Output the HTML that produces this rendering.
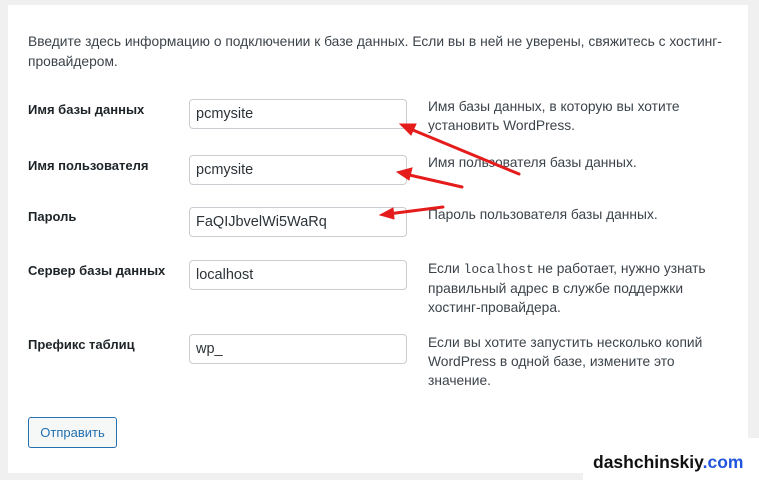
<!DOCTYPE html>
<html><head><meta charset="utf-8"><style>
html,body{margin:0;width:759px;height:480px;overflow:hidden}
body{background:#f0f0f1;font-family:"Liberation Sans",sans-serif;color:#3c434a;font-size:13.8px;position:relative}
.panel{position:absolute;left:8px;top:5px;width:740px;height:468px;background:#fff}
.t{position:absolute;line-height:20px;white-space:nowrap}
.lbl{position:absolute;left:28px;font-weight:bold;color:#1d2327;font-size:13px}
.in{position:absolute;left:189px;width:218px;height:30px;border:1px solid #c9ccd0;border-radius:4px;box-sizing:border-box;padding-left:6px;line-height:28px;font-size:14.5px;color:#2c3338}
.d{position:absolute;left:428px;line-height:19px;white-space:nowrap}
.btn{position:absolute;left:28px;top:417px;width:89px;height:31px;border:1px solid #2271b1;border-radius:3px;box-sizing:border-box;background:#f6f7f7;color:#2271b1;text-align:center;line-height:29px;font-size:13px}
.wm{position:absolute;left:583px;top:438px;width:176px;height:42px;background:#fff;font-weight:bold;font-size:17.5px;line-height:48px;padding-left:10px;box-sizing:border-box;color:#111}
code{font-family:"Liberation Mono",monospace;font-size:13px}
</style></head><body>
<div class="panel"></div>
<div class="t" style="left:28px;top:32px">Введите здесь информацию о подключении к базе данных. Если вы в ней не уверены, свяжитесь с хостинг-</div>
<div class="t" style="left:28px;top:52px">провайдером.</div>
<div class="lbl" style="top:102px">Имя базы данных</div>
<div class="lbl" style="top:158px">Имя пользователя</div>
<div class="lbl" style="top:209px">Пароль</div>
<div class="lbl" style="top:263px">Сервер базы данных</div>
<div class="lbl" style="top:337px">Префикс таблиц</div>
<div class="in" style="top:99px">pcmysite</div>
<div class="in" style="top:155px">pcmysite</div>
<div class="in" style="top:207px">FaQIJbvelWi5WaRq</div>
<div class="in" style="top:260px">localhost</div>
<div class="in" style="top:334px">wp_</div>
<div class="d" style="top:97px">Имя базы данных, в которую вы хотите<br>установить WordPress.</div>
<div class="d" style="top:153px">Имя пользователя базы данных.</div>
<div class="d" style="top:205px">Пароль пользователя базы данных.</div>
<div class="d" style="top:259px">Если <code>localhost</code> не работает, нужно узнать<br>правильный адрес в службе поддержки<br>хостинг-провайдера.</div>
<div class="d" style="top:333px">Если вы хотите запустить несколько копий<br>WordPress в одной базе, измените это<br>значение.</div>
<div class="btn">Отправить</div>
<svg style="position:absolute;left:0;top:0" width="759" height="480">
<g stroke="#e51c1c" stroke-width="3" fill="#e51c1c" stroke-linecap="round">
<line x1="519" y1="174" x2="408" y2="128"/>
<polygon points="400,124 416,124 411,135" stroke-width="1"/>
<line x1="462" y1="187" x2="405" y2="174"/>
<polygon points="397,172 412,168 409,180" stroke-width="1"/>
<line x1="443" y1="207" x2="388" y2="214"/>
<polygon points="380,215 393,208 394,219" stroke-width="1"/>
</g></svg>
<div class="wm">dashchinskiy<span style="color:#2255dd">.com</span></div>
</body></html>
